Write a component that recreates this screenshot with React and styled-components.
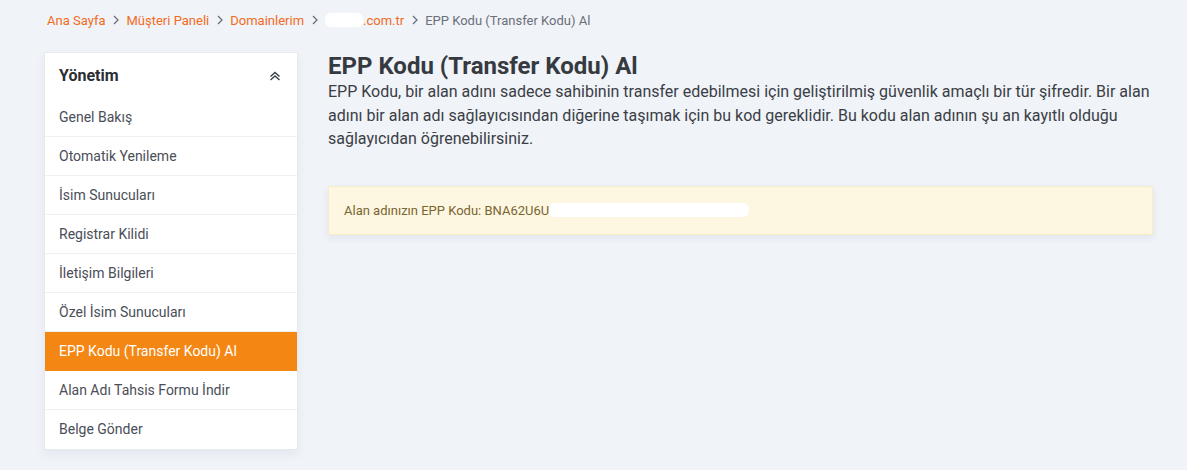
import React from "react";
import styled, { createGlobalStyle } from "styled-components";

const GlobalStyle = createGlobalStyle`
  body {
    margin: 0;
    background: #f0f3f8;
    font-family: Roboto, "Liberation Sans", sans-serif;
    color: #3a3d44;
  }
`;

const menuItems = [
  "Genel Bakış",
  "Otomatik Yenileme",
  "İsim Sunucuları",
  "Registrar Kilidi",
  "İletişim Bilgileri",
  "Özel İsim Sunucuları",
  "EPP Kodu (Transfer Kodu) Al",
  "Alan Adı Tahsis Formu İndir",
  "Belge Gönder"
];

const Styled = {
  Page: styled.div`
    padding: 11px 34px 20px 44px;
  `,

  Breadcrumb: styled.nav`
    display: flex;
    align-items: center;
    height: 18px;
    padding-left: 3px;
    font-size: 13px;
    margin-bottom: 23px;
  `,

  Crumb: styled.a`
    color: ${({ $current }) => ($current ? "#6b6f78" : "#f26b1d")};
    text-decoration: none;
    display: inline-flex;
    align-items: center;
  `,

  Sep: styled.span`
    color: #6b6f78;
    margin: 0 6px 0 7px;
    display: inline-flex;
    align-items: center;
  `,

  Blot: styled.span`
    display: inline-block;
    width: ${({ $w }) => $w}px;
    height: ${({ $h }) => $h || 12}px;
    background: #fff;
    border-radius: 6px;
    vertical-align: middle;
  `,

  Layout: styled.div`
    display: grid;
    grid-template-columns: 254px 1fr;
    column-gap: 30px;
    align-items: start;
  `,

  Sidebar: styled.aside`
    background: #fff;
    border: 1px solid #e6e9ee;
    box-shadow: 0 4px 10px rgba(40, 50, 80, 0.06);
  `,

  SideHead: styled.div`
    display: flex;
    align-items: center;
    justify-content: space-between;
    height: 45px;
    padding: 0 16px 0 14px;
    font-size: 16px;
    font-weight: 700;
    color: #2b2e33;
  `,

  MenuItem: styled.a`
    display: flex;
    align-items: center;
    height: 38px;
    padding: 0 14px;
    font-size: 14px;
    text-decoration: none;
    color: ${({ $active }) => ($active ? "#fff" : "#4a4e57")};
    background: ${({ $active }) => ($active ? "#f48614" : "transparent")};
    border-bottom: 1px solid ${({ $last, $active }) => ($last ? "transparent" : $active ? "#f48614" : "#eef0f3")};
  `,

  Main: styled.main`
    padding-top: 1px;
  `,

  Title: styled.h1`
    margin: 0;
    font-size: 24px;
    line-height: 26px;
    font-weight: 700;
    color: #363a40;
  `,

  Lead: styled.p`
    margin: 1px 0 0;
    font-size: 16px;
    line-height: 23.5px;
    color: #3a3e45;
  `,

  Alert: styled.div`
    margin-top: 35px;
    background: #fdf7e2;
    border: 1px solid #f8ecc6;
    box-shadow: 0 3px 8px rgba(40, 50, 80, 0.07);
    height: 47px;
    padding: 0 15px;
    display: flex;
    align-items: center;
    font-size: 13px;
    color: #7a6431;
  `
};

function Chevron() {
  return (
    <svg width="8" height="10" viewBox="0 0 8 10">
      <path d="M2 1l4 4-4 4" fill="none" stroke="#6b6f78" strokeWidth="1.3" />
    </svg>
  );
}

function DoubleUp() {
  return (
    <svg width="12" height="10" viewBox="0 0 12 10">
      <path d="M1.5 5.5L6 1.5l4.5 4M1.5 9L6 5l4.5 4" fill="none" stroke="#3b3f48" strokeWidth="1.4" />
    </svg>
  );
}

function App() {
  return (
    <>
      <GlobalStyle />
      <Styled.Page>
        <Styled.Breadcrumb>
          <Styled.Crumb href="#">Ana Sayfa</Styled.Crumb>
          <Styled.Sep><Chevron /></Styled.Sep>
          <Styled.Crumb href="#">Müşteri Paneli</Styled.Crumb>
          <Styled.Sep><Chevron /></Styled.Sep>
          <Styled.Crumb href="#">Domainlerim</Styled.Crumb>
          <Styled.Sep><Chevron /></Styled.Sep>
          <Styled.Crumb href="#">
            <Styled.Blot $w={38} $h={14} />.com.tr
          </Styled.Crumb>
          <Styled.Sep><Chevron /></Styled.Sep>
          <Styled.Crumb $current>EPP Kodu (Transfer Kodu) Al</Styled.Crumb>
        </Styled.Breadcrumb>

        <Styled.Layout>
          <Styled.Sidebar>
            <Styled.SideHead>
              Yönetim
              <DoubleUp />
            </Styled.SideHead>
            {menuItems.map((item, index) => (
              <Styled.MenuItem
                key={item}
                href="#"
                $active={index === 6}
                $last={index === menuItems.length - 1}
              >
                {item}
              </Styled.MenuItem>
            ))}
          </Styled.Sidebar>

          <Styled.Main>
            <Styled.Title>EPP Kodu (Transfer Kodu) Al</Styled.Title>
            <Styled.Lead>
              EPP Kodu, bir alan adını sadece sahibinin transfer edebilmesi için geliştirilmiş güvenlik amaçlı bir tür şifredir. Bir alan adını bir alan adı sağlayıcısından diğerine taşımak için bu kod gereklidir. Bu kodu alan adının şu an kayıtlı olduğu sağlayıcıdan öğrenebilirsiniz.
            </Styled.Lead>
            <Styled.Alert>
              Alan adınızın EPP Kodu: BNA62U6U
              <Styled.Blot $w={200} $h={14} />
            </Styled.Alert>
          </Styled.Main>
        </Styled.Layout>
      </Styled.Page>
    </>
  );
}

export default App;
